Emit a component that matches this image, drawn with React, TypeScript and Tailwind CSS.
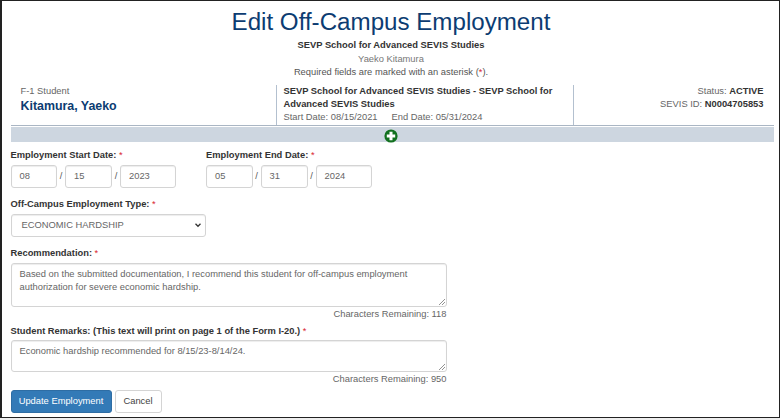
const Req = () => <span className="text-[#d9232e] font-normal"> *</span>;

const inputBox =
  "h-[23px] rounded-[3px] border border-[#d4d4d4] bg-white text-[9.35px] text-[#666] shadow-[inset_0_1px_1px_rgba(0,0,0,0.075)] flex items-center";

const labelText = "text-[9.35px] leading-[14px] font-bold text-[#333]";

function DateField({ label, parts }: { label: string; parts: string[] }) {
  return (
    <div className="w-[195.5px]">
      <div className={labelText}>
        {label}
        <Req />
      </div>
      <div className="mt-[3px] flex items-center">
        <div className={`${inputBox} w-[46.5px] pl-[8px]`}>{parts[0]}</div>
        <span className="w-[8px] text-center text-[9.35px] text-[#555]">/</span>
        <div className={`${inputBox} w-[47px] pl-[8px]`}>{parts[1]}</div>
        <span className="w-[8px] text-center text-[9.35px] text-[#555]">/</span>
        <div className={`${inputBox} w-[56px] pl-[8px]`}>{parts[2]}</div>
      </div>
    </div>
  );
}

function TextBox({ lines, height }: { lines: string[]; height: string }) {
  return (
    <div className={`relative w-[436px] ${height} rounded-[3px] border border-[#d4d4d4] bg-white px-[8px] pt-[4px] text-[9.35px] leading-[13px] text-[#666] shadow-[inset_0_1px_1px_rgba(0,0,0,0.075)]`}>
      {lines.map((line) => (
        <div key={line}>{line}</div>
      ))}
      {/* resize handle */}
      <svg className="absolute right-0 bottom-0" width="8" height="8" viewBox="0 0 8 8">
        <path d="M1 7 L7 1 M4 7 L7 4" stroke="#777" strokeWidth="0.8" fill="none" />
      </svg>
    </div>
  );
}

export default function App() {
  return (
    <div className="h-[420px] w-[780px] overflow-hidden bg-[#eee] font-['Liberation_Sans',Arial,sans-serif]">
      <div className="h-[418px] w-[780px] border-y-[1.5px] border-r-[1.5px] border-l-[2px] border-[#222] bg-white">
        {/* Header */}
        <div className="pt-[6px] pl-[1px] text-center">
          <h1 className="text-[24.15px] leading-[30px] font-normal text-[#0c3c72]">Edit Off-Campus Employment</h1>
          <div className="mt-[2px] text-[9.35px] leading-[13.5px] font-bold text-[#333]">SEVP School for Advanced SEVIS Studies</div>
          <div className="text-[9.35px] leading-[13.5px] text-[#777]">Yaeko Kitamura</div>
          <div className="text-[9.35px] leading-[13.5px] text-[#555]">
            Required fields are marked with an asterisk (<span className="text-[#d9232e]">*</span>).
          </div>
        </div>

        {/* Student banner */}
        <div className="mt-[5px] mr-[5.5px] ml-[8.5px]">
          <div className="flex h-[40px]">
            <div className="w-[265px] pl-[10px]">
              <div className="text-[9.35px] leading-[13px] text-[#666]">F-1 Student</div>
              <div className="text-[12.4px] leading-[17px] font-bold text-[#0c3c72]">Kitamura, Yaeko</div>
            </div>
            <div className="w-[297px] border-l border-[#b3c0cf] pl-[7px] text-[9.35px] leading-[13.4px]">
              <div className="font-bold text-[#333]">SEVP School for Advanced SEVIS Studies - SEVP School for<br />Advanced SEVIS Studies</div>
              <div className="text-[#666]">Start Date: 08/15/2021<span className="ml-[14px]">End Date: 05/31/2024</span></div>
            </div>
            <div className="flex-1 border-l border-[#b3c0cf] pr-[10px] text-right text-[9.35px] leading-[13.4px] text-[#666]">
              <div>Status: <span className="font-bold text-[#333]">ACTIVE</span></div>
              <div>SEVIS ID: <span className="font-bold text-[#333]">N0004705853</span></div>
            </div>
          </div>
          <div className="h-px bg-[#aab6c4]" />
          <div className="mt-px flex h-[15px] items-center justify-center bg-[#cdd6e0]">
            <svg className="mr-[2px] mb-[-4px]" width="14" height="14" viewBox="0 0 14 14">
              <circle cx="7" cy="7" r="6.6" fill="#12711f" />
              <path d="M5.5 2.8h3v2.7h2.7v3H8.5v2.7h-3V8.5H2.8v-3h2.7z" fill="#fff" />
            </svg>
          </div>
        </div>

        {/* Form */}
        <div className="mt-[6px] ml-[8.5px]">
          <div className="flex">
            <DateField label="Employment Start Date:" parts={["08", "15", "2023"]} />
            <DateField label="Employment End Date:" parts={["05", "31", "2024"]} />
          </div>

          <div className={`mt-[9px] ${labelText}`}>
            Off-Campus Employment Type:<Req />
          </div>
          <div className={`${inputBox} mt-[3px] w-[195.5px] justify-between pr-[3px] pl-[10px]`}>
            <span>ECONOMIC HARDSHIP</span>
            <svg width="8" height="8" viewBox="0 0 8 8">
              <path d="M1.5 2.8 L4 5.3 L6.5 2.8" stroke="#333" strokeWidth="1.3" fill="none" />
            </svg>
          </div>

          <div className={`mt-[9px] ${labelText}`}>
            Recommendation:<Req />
          </div>
          <div className="mt-[3px]">
            <TextBox
              height="h-[44px]"
              lines={[
                "Based on the submitted documentation, I recommend this student for off-campus employment",
                "authorization for severe economic hardship.",
              ]}
            />
          </div>
          <div className="w-[436px] text-right text-[9.35px] leading-[14px] text-[#666]">Characters Remaining: 118</div>

          <div className={`mt-[3px] ${labelText}`}>
            Student Remarks: (This text will print on page 1 of the Form I-20.)<Req />
          </div>
          <div className="mt-[2px]">
            <TextBox height="h-[32px]" lines={["Economic hardship recommended for 8/15/23-8/14/24."]} />
          </div>
          <div className="w-[436px] text-right text-[9.35px] leading-[14px] text-[#666]">Characters Remaining: 950</div>

          <div className="mt-[4px] flex gap-[3px]">
            <button className="h-[23px] w-[101px] rounded-[3px] border border-[#2e6da4] bg-[#337ab7] text-[9.35px] text-white">Update Employment</button>
            <button className="h-[23px] w-[47px] rounded-[3px] border border-[#d4d4d4] bg-white text-[9.35px] text-[#444]">Cancel</button>
          </div>
        </div>
      </div>
    </div>
  );
}
